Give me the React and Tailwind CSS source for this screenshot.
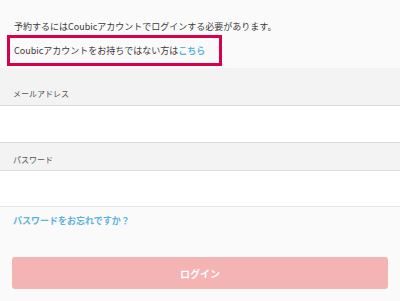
import React, { useState } from 'react';

const font = { fontFamily: '"Noto Sans CJK JP", "Noto Sans", sans-serif' };

const App = () => {
  const [email, setEmail] = useState('');
  const [password, setPassword] = useState('');

  return (
    <div className="w-[400px] h-[301px] bg-[#fafafa] text-[#333] overflow-hidden" style={font}>
      {/* Notice */}
      <div className="pt-[20px]">
        <p className="pl-[14px] h-[14px] leading-[14px] text-[9px] text-[#3a3a3a]">
          予約するにはCoubicアカウントでログインする必要があります。
        </p>
        <div className="ml-[7px] mt-[1px] w-[215px] h-[31px] border-[3px] border-[#d8004b] flex items-center pl-[4px]">
          <p className="text-[9px] text-[#3a3a3a] leading-none">
            Coubicアカウントをお持ちではない方は<a href="#" className="text-[#5ab4da] font-bold">こちら</a>
          </p>
        </div>
      </div>

      {/* Form */}
      <form className="mt-[2px]" onSubmit={(e) => e.preventDefault()}>
        <div className="h-[38px] bg-[#f3f3f3] border-b border-[#dcdcdc] flex items-end pb-[7px] pl-[13px]">
          <label className="text-[8px] text-[#555] leading-none">メールアドレス</label>
        </div>
        <input
          type="email"
          value={email}
          onChange={(e) => setEmail(e.target.value)}
          className="block w-full h-[37px] bg-white border-b border-[#dcdcdc] px-[13px] text-[9px] outline-none"
        />
        <div className="h-[28px] bg-[#f3f3f3] border-b border-[#dcdcdc] flex items-end pb-[6px] pl-[13px]">
          <label className="text-[8px] text-[#555] leading-none">パスワード</label>
        </div>
        <input
          type="password"
          value={password}
          onChange={(e) => setPassword(e.target.value)}
          className="block w-full h-[36px] bg-white border-b border-[#e6e6e6] px-[13px] text-[9px] outline-none"
        />

        <div className="pl-[13px] pt-[9px] h-[50px] text-[9px] leading-none">
          <a href="#" className="font-bold text-[#5ab4da]">パスワードをお忘れですか？</a>
        </div>

        <div className="px-[12px]">
          <button
            type="submit"
            className="w-full h-[32px] rounded-[3px] bg-[#f4b4b4] text-white text-[10px] font-bold"
          >
            ログイン
          </button>
        </div>
      </form>
    </div>
  );
};

export default App;
